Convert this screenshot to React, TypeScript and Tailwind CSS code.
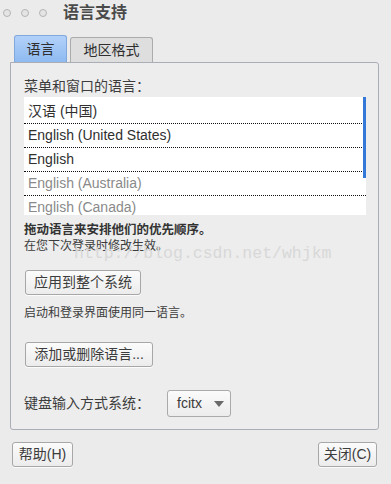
import React from "react";

const langs = [
  { name: "汉语 (中国)", active: true },
  { name: "English (United States)", active: true },
  { name: "English", active: true },
  { name: "English (Australia)", active: false },
  { name: "English (Canada)", active: false },
];

const Btn = ({ children, className = "" }: { children: React.ReactNode; className?: string }) => (
  <button
    className={`h-[25px] rounded-[3px] border border-[#a7a7a7] bg-gradient-to-b from-[#fbfbfb] to-[#ececec] text-[14px] text-[#3c3c3c] shadow-[0_1px_0_rgba(255,255,255,0.8)] flex items-center justify-center ${className}`}
  >
    {children}
  </button>
);

const Dot = () => (
  <div className="w-[8px] h-[8px] rounded-full border border-[#b4b4b4] bg-[#e4e4e4]" />
);

export default function App() {
  return (
    <div
      className="w-[391px] h-[484px] bg-[#ebebeb] text-[#3c3c3c] relative overflow-hidden"
      style={{ fontFamily: '"Liberation Sans", "Noto Sans CJK SC", sans-serif' }}
    >
      {/* title bar */}
      <div className="h-[25px] flex items-center pl-[3px]">
        <div className="flex items-center gap-[10px]">
          <Dot />
          <Dot />
          <Dot />
        </div>
        <div className="ml-[16px] text-[16px] font-bold text-[#4a4a4a] leading-none">语言支持</div>
      </div>

      {/* tabs */}
      <div className="mt-[10px] pl-[14px] flex items-end h-[27px]">
        <div className="w-[53px] h-[27px] rounded-t-[3px] border border-b-0 border-[#80a8dc] bg-gradient-to-b from-[#b2d1f9] to-[#8ebaf1] flex items-center justify-center text-[14px] text-[#2e2e2e]">
          语言
        </div>
        <div className="ml-[3px] w-[83px] h-[25px] rounded-t-[3px] border border-b-0 border-[#ababab] bg-[#dedede] flex items-center justify-center text-[14px] text-[#2e2e2e]">
          地区格式
        </div>
      </div>

      {/* panel */}
      <div className="mx-[10px] w-[369px] h-[368px] border border-[#a9adb5] rounded-b-[3px] rounded-tr-[3px] bg-[#ededed] pl-[13px] pr-[11px] pt-[13px] flex flex-col">
        <div className="text-[14px] leading-[20px] h-[20px]">菜单和窗口的语言：</div>
        <div className="mt-[1px] w-[342px] h-[118px] bg-white relative overflow-hidden pt-[3px]">
          {langs.map((l) => (
            <div
              key={l.name}
              className={`h-[24px] flex items-center pl-[4px] text-[14px] border-b border-dotted border-[#111] ${
                l.active ? "text-[#2f2f2f]" : "text-[#8a8a8a]"
              }`}
            >
              {l.name}
            </div>
          ))}
          <div className="absolute right-0 top-0 w-[3px] h-[81px] bg-[#3479d8]" />
        </div>

        <div className="mt-[7px] text-[12.5px] font-bold leading-[16px] text-[#333]">拖动语言来安排他们的优先顺序。</div>
        <div className="text-[12px] leading-[16px]">在您下次登录时修改生效。</div>

        <Btn className="mt-[16px] ml-[1px] w-[116px]">应用到整个系统</Btn>

        <div className="mt-[10px] text-[12px] leading-[16px]">启动和登录界面使用同一语言。</div>

        <Btn className="mt-[21px] ml-[1px] w-[128px]">添加或删除语言...</Btn>

        <div className="mt-[23px] flex items-center h-[27px]">
          <div className="text-[14px] w-[143px]">键盘输入方式系统：</div>
          <div className="w-[64px] h-[27px] rounded-[3px] border border-[#aaaaaa] bg-gradient-to-b from-[#fbfbfb] to-[#ececec] flex items-center pl-[9px] text-[14px]">
            <span>fcitx</span>
            <svg width="10" height="6" viewBox="0 0 10 6" className="ml-[12px]">
              <path d="M0 0 L10 0 L5 6 Z" fill="#6a6a6a" />
            </svg>
          </div>
        </div>
      </div>

      {/* bottom buttons */}
      <div className="mt-[12px] pl-[12px] pr-[14px] flex justify-between">
        <Btn className="w-[61px]">帮助(H)</Btn>
        <Btn className="w-[59px]">关闭(C)</Btn>
      </div>

      {/* watermark */}
      <div
        className="absolute left-[74px] top-[244px] text-[16.5px] text-[#d8d8d8] leading-[20px] pointer-events-none"
        style={{ fontFamily: '"Liberation Mono", monospace' }}
      >
        http://blog.csdn.net/whjkm
      </div>
    </div>
  );
}
